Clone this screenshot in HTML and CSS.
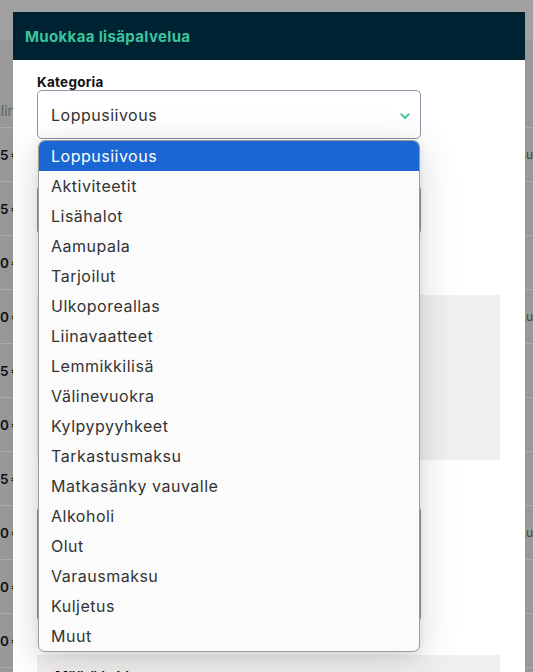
FILE: index.html
```html
<!DOCTYPE html>
<html lang="fi">
<head>
<meta charset="utf-8">
<title>Muokkaa lisäpalvelua</title>
<link rel="stylesheet" href="styles.css">
</head>
<body>
<div class="page">
  <div class="topbar"></div>
  <div class="thead"><span class="link">Valinnat</span></div>
  <div class="row"><span class="price">5 €</span><span class="extra">Sauna</span></div>
  <div class="row"><span class="price">5 €</span></div>
  <div class="row"><span class="price">0 €</span></div>
  <div class="row"><span class="price">0 €</span><span class="extra">Sauna</span></div>
  <div class="row"><span class="price">5 €</span></div>
  <div class="row"><span class="price">0 €</span></div>
  <div class="row"><span class="price">5 €</span></div>
  <div class="row"><span class="price">0 €</span><span class="extra">Sauna</span></div>
  <div class="row"><span class="price">0 €</span></div>
  <div class="row"><span class="price">0 €</span></div>
</div>

<div class="modal">
  <div class="modal-head"><h2 class="modal-title">Muokkaa lisäpalvelua</h2></div>
  <div class="modal-body">
    <div class="label">Kategoria</div>
    <div class="select-wrap">
      <div class="select">
        <span>Loppusiivous</span>
        <svg class="chev" width="10" height="7" viewBox="0 0 10 7"><polyline points="1.2,1.2 5,5 8.8,1.2" fill="none" stroke="#3fc39c" stroke-width="1.8" stroke-linecap="round" stroke-linejoin="round"/></svg>
      </div>
      <ul class="dropdown">
        <li class="opt selected">Loppusiivous</li>
        <li class="opt">Aktiviteetit</li>
        <li class="opt">Lisähalot</li>
        <li class="opt">Aamupala</li>
        <li class="opt">Tarjoilut</li>
        <li class="opt">Ulkoporeallas</li>
        <li class="opt">Liinavaatteet</li>
        <li class="opt">Lemmikkilisä</li>
        <li class="opt">Välinevuokra</li>
        <li class="opt">Kylpypyyhkeet</li>
        <li class="opt">Tarkastusmaksu</li>
        <li class="opt">Matkasänky vauvalle</li>
        <li class="opt">Alkoholi</li>
        <li class="opt">Olut</li>
        <li class="opt">Varausmaksu</li>
        <li class="opt">Kuljetus</li>
        <li class="opt">Muut</li>
      </ul>
    </div>
    <div class="field"></div>
    <div class="graybox"></div>
    <div class="field tall"></div>
    <div class="graybox small"><span class="gb-label">Määrä ja hinta</span></div>
  </div>
</div>
</body>
</html>
```

FILE: styles.css
```css
* { box-sizing: border-box; }
html, body { margin: 0; padding: 0; }
body {
  width: 533px;
  height: 672px;
  overflow: hidden;
  background: #999999;
  font-family: "Inter", "Noto Sans", sans-serif;
  position: relative;
}
.page { display: flex; flex-direction: column; }
.topbar { height: 40px; background: #a0a0a0; }
.thead {
  height: 88px;
  display: flex;
  align-items: flex-end;
  padding-bottom: 8px;
  border-bottom: 1px solid #ababab;
}
.link { margin-left: -16px; font-size: 14px; color: #5a6468; }
.row {
  height: 54px;
  border-bottom: 1px solid #ababab;
  display: flex;
  align-items: center;
  justify-content: space-between;
}
.price { font-size: 13.5px; color: #111; font-weight: 600; word-spacing: -1px; }
.extra { font-size: 12px; color: #444; margin-right: -14px; }

.modal {
  position: absolute;
  left: 13px;
  top: 12px;
  width: 512px;
  height: 700px;
  background: #fff;
}
.modal-head {
  height: 48px;
  background: #002333;
  display: flex;
  align-items: center;
  padding-left: 12px;
}
.modal-title {
  margin: 0;
  font-size: 15px;
  font-weight: 700;
  letter-spacing: 0.35px;
  color: #3cc39b;
}
.modal-body { padding: 14px 24px 0 24px; }
.label {
  font-size: 13.5px;
  font-weight: 700;
  letter-spacing: 0.25px;
  color: #111;
  height: 16px;
  line-height: 16px;
}
.select-wrap { position: relative; width: 384px; }
.select {
  height: 49px;
  border: 1px solid #8c95a6;
  border-radius: 5px;
  background: #fff;
  display: flex;
  align-items: center;
  justify-content: space-between;
  padding: 0 10px 0 13px;
  font-size: 16px;
  letter-spacing: 0.5px;
  color: #333;
}
.chev { margin-top: 3px; }
.dropdown {
  position: absolute;
  top: 50px;
  left: 1px;
  width: 382px;
  margin: 0;
  padding: 0;
  list-style: none;
  background: #fbfbfb;
  border: 1px solid #9c9c9c;
  border-radius: 7px;
  overflow: hidden;
  box-shadow: 0 8px 40px rgba(0, 0, 0, 0.16), 0 2px 8px rgba(0,0,0,0.08);
  z-index: 5;
}
.opt {
  height: 30px;
  line-height: 30px;
  padding-left: 12px;
  font-size: 16px;
  letter-spacing: 0.5px;
  color: #333;
}
.opt.selected { background: #1a66d2; color: #fff; }
.field {
  margin-top: 46px;
  width: 384px;
  height: 50px;
  border: 1px solid #8c95a6;
  border-radius: 5px;
}
.field.tall { margin-top: 46px; height: 116px; }
.graybox {
  margin-top: 60px;
  width: 463px;
  height: 165px;
  background: #f1f0ee;
}
.graybox.small { margin-top: 33px; height: 60px; padding: 13px 18px; line-height: 17px; }
.gb-label { font-size: 14px; font-weight: 700; color: #111; }
```
